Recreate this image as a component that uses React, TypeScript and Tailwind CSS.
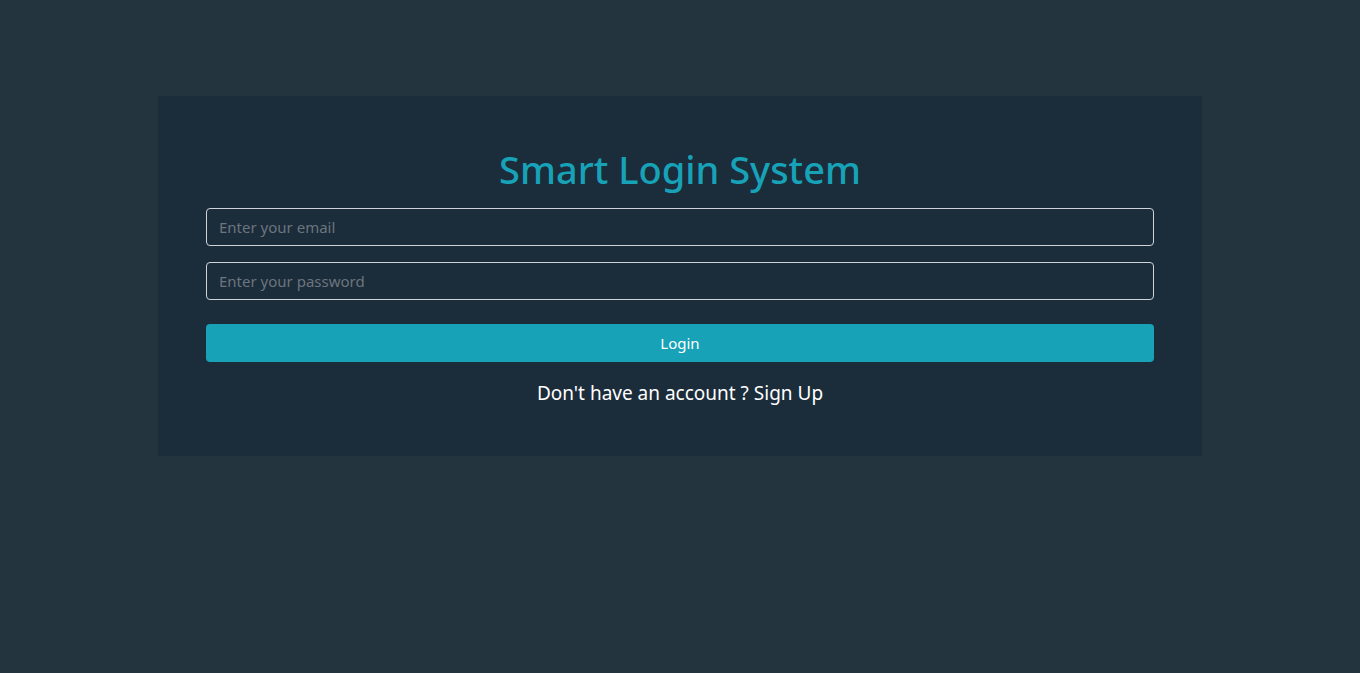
import React, { useState } from "react";

const App: React.FC = () => {
  const [email, setEmail] = useState("");
  const [password, setPassword] = useState("");

  return (
    <div
      className="min-h-screen w-full bg-[#24343f] pt-[96px]"
      style={{ fontFamily: '"Noto Sans", "Open Sans", sans-serif' }}
    >
      <div className="mx-auto w-[1044px] bg-[#1b2c3b] px-12 pt-[49px] pb-12">
        <h1 className="mb-[15px] text-center text-[38px] font-medium leading-[48px] text-[#17a2b8]">
          Smart Login System
        </h1>
        <input
          type="email"
          value={email}
          onChange={(e) => setEmail(e.target.value)}
          placeholder="Enter your email"
          className="block h-[38px] w-full rounded-[4px] border border-[#ced4da] bg-transparent px-3 text-[15px] text-white placeholder:text-[#6c757d] outline-none"
        />
        <input
          type="password"
          value={password}
          onChange={(e) => setPassword(e.target.value)}
          placeholder="Enter your password"
          className="mt-4 block h-[38px] w-full rounded-[4px] border border-[#ced4da] bg-transparent px-3 text-[15px] text-white placeholder:text-[#6c757d] outline-none"
        />
        <button className="mt-6 block h-[38px] w-full rounded-[4px] bg-[#17a2b8] text-[15px] text-white">
          Login
        </button>
        <p className="mt-4 text-center text-[19px] leading-[30px] text-white">
          Don't have an account ? Sign Up
        </p>
      </div>
    </div>
  );
};

export default App;
